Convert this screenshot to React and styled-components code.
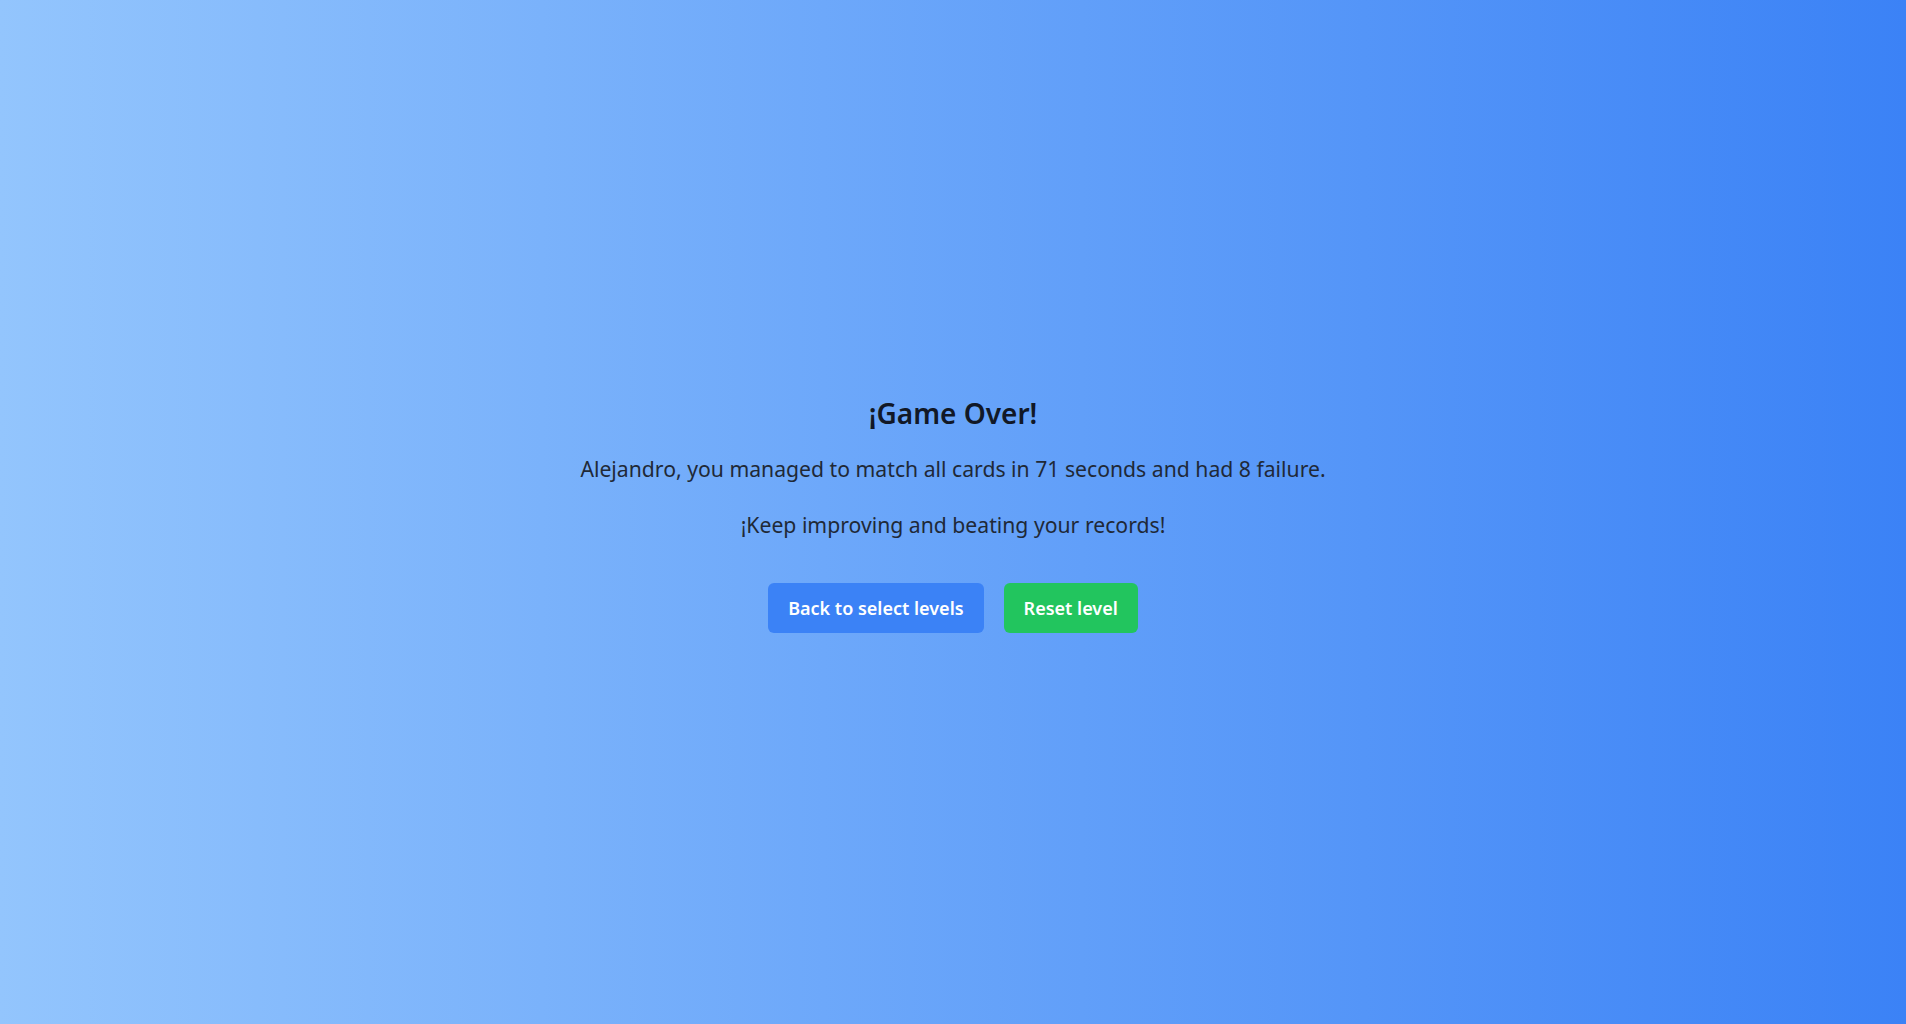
import React from "react";
import styled, { createGlobalStyle } from "styled-components";

const GlobalStyle = createGlobalStyle`
    * {
        box-sizing: border-box;
    }
    body {
        margin: 0;
        font-family: "Noto Sans", "Open Sans", sans-serif;
    }
`;

function App() {
    const player = "Alejandro";
    const seconds = 71;
    const failures = 8;

    return (
        <>
            <GlobalStyle />
            <Screen>
                <Heading>¡Game Over!</Heading>
                <Message>
                    {player}, you managed to match all cards in {seconds} seconds and
                    had {failures} failure.
                </Message>
                <Cheer>¡Keep improving and beating your records!</Cheer>
                <Actions>
                    <ActionButton $color="#3b82f6">Back to select levels</ActionButton>
                    <ActionButton $color="#22c55e">Reset level</ActionButton>
                </Actions>
            </Screen>
        </>
    );
}

export default App;

const Screen = styled.div`
    min-height: 100vh;
    display: flex;
    flex-direction: column;
    align-items: center;
    justify-content: center;
    padding-top: 4px;
    text-align: center;
    background: linear-gradient(to right, #93c5fd, #3b82f6);
`;
const Heading = styled.h1`
    margin: 0 0 24px;
    font-size: 28px;
    line-height: 36px;
    font-weight: 600;
    color: #111827;
`;
const Message = styled.p`
    margin: 0 0 28px;
    font-size: 21.2px;
    line-height: 28px;
    color: #1f2937;
`;
const Cheer = styled(Message)`
    margin-bottom: 44px;
`;
const Actions = styled.div`
    display: flex;
    gap: 20px;
`;
const ActionButton = styled.button`
    height: 50px;
    padding: 0 20px;
    border: none;
    border-radius: 6px;
    background: ${(p) => p.$color};
    color: #fff;
    font-family: inherit;
    font-size: 18px;
    font-weight: 600;
    cursor: pointer;
`;
